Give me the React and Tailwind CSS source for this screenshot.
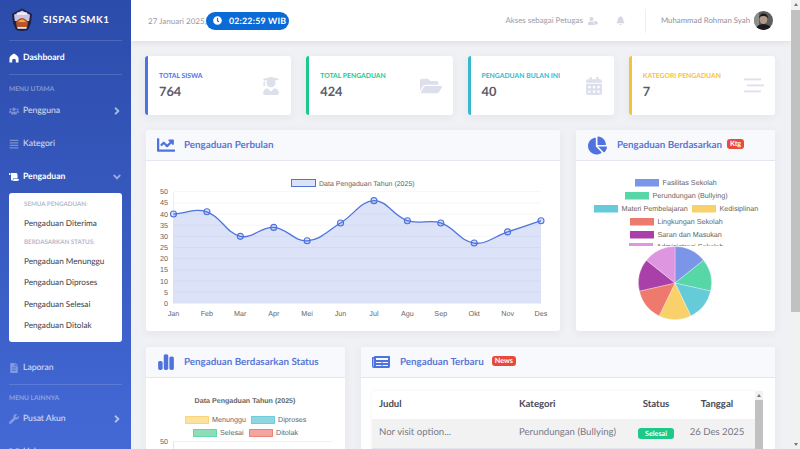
import React from "react";
import {
  FaUsers, FaAlignJustify, FaScroll, FaFileAlt, FaWrench, FaAngleRight, FaAngleDown, FaClock, FaUserTag, FaBell,
  FaUserGraduate, FaFolderOpen, FaCalendarAlt, FaChartLine, FaChartPie, FaNewspaper,
} from "react-icons/fa";
import { FaChartSimple, FaDiagramProject } from "react-icons/fa6";

const months = ["Jan", "Feb", "Mar", "Apr", "Mei", "Jun", "Jul", "Agu", "Sep", "Okt", "Nov", "Des"];
const values = [40, 41, 30, 34, 28, 36, 46, 37, 36, 27, 32, 37];

const plot = { left: 27.5, right: 395, top: 30.7, bottom: 142.3 };
const px = (i) => plot.left + (i * (plot.right - plot.left)) / 11;
const py = (v) => plot.bottom - (v / 50) * (plot.bottom - plot.top);
const points = values.map((v, i) => [px(i), py(v)]);

// same curve as chart.js with tension 0.4
function linePath() {
  const ctrl = points.map((p, i) => {
    const a = points[i - 1] || p;
    const b = points[i + 1] || p;
    const d1 = Math.hypot(p[0] - a[0], p[1] - a[1]);
    const d2 = Math.hypot(b[0] - p[0], b[1] - p[1]);
    const s1 = d1 / (d1 + d2);
    const s2 = d2 / (d1 + d2);
    return {
      prev: [p[0] - 0.4 * s1 * (b[0] - a[0]), p[1] - 0.4 * s1 * (b[1] - a[1])],
      next: [p[0] + 0.4 * s2 * (b[0] - a[0]), p[1] + 0.4 * s2 * (b[1] - a[1])],
    };
  });
  let d = `M${points[0][0]} ${points[0][1]}`;
  for (let i = 1; i < points.length; i++) {
    const c1 = ctrl[i - 1].next;
    const c2 = ctrl[i].prev;
    d += ` C${c1[0]} ${c1[1]} ${c2[0]} ${c2[1]} ${points[i][0]} ${points[i][1]}`;
  }
  return d;
}

function pieSlice(i, n, cx, cy, r) {
  const a1 = (i / n) * 2 * Math.PI - Math.PI / 2;
  const a2 = ((i + 1) / n) * 2 * Math.PI - Math.PI / 2;
  return `M${cx} ${cy} L${cx + r * Math.cos(a1)} ${cy + r * Math.sin(a1)} A${r} ${r} 0 0 1 ${cx + r * Math.cos(a2)} ${cy + r * Math.sin(a2)} Z`;
}

const chartText = { fontFamily: "'Liberation Sans', sans-serif" };

function LineChart() {
  const line = linePath();
  return (
    <svg width="414" height="170" style={chartText} className="block">
      <rect x="145.5" y="18.5" width="24" height="7" fill="#dce3f9" stroke="#4e73df" />
      <text x="173" y="24.5" fontSize="7" fill="#666">Data Pengaduan Tahun (2025)</text>
      {[0, 5, 10, 15, 20, 25, 30, 35, 40, 45, 50].map((t) => (
        <g key={t}>
          <line x1={plot.left} x2={plot.right} y1={py(t)} y2={py(t)} stroke="#f6f6f6" />
          <text x="22" y={py(t) + 2.6} fontSize="7.2" fill="#666" textAnchor="end">{t}</text>
        </g>
      ))}
      <line x1={plot.left} x2={plot.left} y1={plot.top} y2={plot.bottom} stroke="#eee" />
      <path d={`${line} L${plot.right} ${plot.bottom} L${plot.left} ${plot.bottom} Z`} fill="#4e73df" fillOpacity="0.2" />
      <path d={line} fill="none" stroke="#4e73df" strokeWidth="1.3" />
      {points.map((p, i) => (
        <circle key={i} cx={p[0]} cy={p[1]} r="3" fill="#4e73df" fillOpacity="0.2" stroke="#4e73df" strokeWidth="1.1" />
      ))}
      {months.map((m, i) => (
        <text key={m} x={px(i)} y="154.5" fontSize="7.2" fill="#666" textAnchor="middle">{m}</text>
      ))}
    </svg>
  );
}

const pieLegend = [
  { x: 59, y: 18, label: "Fasilitas Sekolah", color: "#7b96e8" },
  { x: 49, y: 31, label: "Perundungan (Bullying)", color: "#57d6a8" },
  { x: 18, y: 44, label: "Materi Pembelajaran", color: "#66cbd9" },
  { x: 116, y: 44, label: "Kedisiplinan", color: "#f8d16b" },
  { x: 54, y: 57, label: "Lingkungan Sekolah", color: "#ed7a6d" },
  { x: 54, y: 70, label: "Saran dan Masukan", color: "#a93fa8" },
  { x: 53, y: 82, label: "Administrasi Sekolah", color: "#df96e0" },
];
const pieColors = ["#7b96e8", "#57d6a8", "#66cbd9", "#f8d16b", "#ed7a6d", "#a93fa8", "#df96e0"];

function PieChart() {
  return (
    <svg width="199" height="170" style={chartText} className="block">
      <defs>
        <clipPath id="legend-clip">
          <rect x="0" y="0" width="199" height="85" />
        </clipPath>
      </defs>
      <g clipPath="url(#legend-clip)">
        {pieLegend.map((l) => (
          <g key={l.label}>
            <rect x={l.x} y={l.y} width="24" height="7.5" fill={l.color} />
            <text x={l.x + 27.5} y={l.y + 6.2} fontSize="7.2" fill="#666">{l.label}</text>
          </g>
        ))}
      </g>
      {pieColors.map((c, i) => (
        <path key={c} d={pieSlice(i, 7, 99, 122, 36.5)} fill={c} stroke="#fff" strokeWidth="0.3" />
      ))}
    </svg>
  );
}

const statusLegend = [
  { x: 39, y: 38, label: "Menunggu", color: "#fbe29f", line: "#f6c23e" },
  { x: 105, y: 38, label: "Diproses", color: "#8fd6e0", line: "#36b9cc" },
  { x: 47, y: 51, label: "Selesai", color: "#8fdcb8", line: "#1cc88a" },
  { x: 103, y: 51, label: "Ditolak", color: "#f3a5a0", line: "#e74a3b" },
];

function StatusChart() {
  return (
    <svg width="199" height="170" style={chartText} className="block">
      <text x="99" y="25" fontSize="7.1" fontWeight="700" fill="#666" textAnchor="middle">Data Pengaduan Tahun (2025)</text>
      {statusLegend.map((l) => (
        <g key={l.label}>
          <rect x={l.x + 0.5} y={l.y + 0.5} width="23" height="7" fill={l.color} stroke={l.line} strokeOpacity="0.6" />
          <text x={l.x + 27} y={l.y + 6.2} fontSize="7.2" fill="#666">{l.label}</text>
        </g>
      ))}
      <text x="22" y="66" fontSize="7.2" fill="#666" textAnchor="end">50</text>
      <line x1="27.5" x2="27.5" y1="63" y2="170" stroke="#e5e5e5" />
      <line x1="27.5" x2="186" y1="63.5" y2="63.5" stroke="#f2f2f2" />
    </svg>
  );
}

function Logo() {
  return (
    <svg width="22" height="24" viewBox="0 0 22 24" className="shrink-0">
      <path d="M11 0.5 L21 6 L20 15 L17 22 Q11 24 5 22 L2 15 L1 6 Z" fill="#22203f" />
      <path d="M11 2.5 L19 6.8 L18.2 13 H3.8 L3 6.8 Z" fill="#c9c4e6" />
      <path d="M5 14 Q11 6 17 14 L16 20 H6 Z" fill="#b8562a" />
      <path d="M7 14 Q11 9 15 14 Z" fill="#f0b040" />
      <rect x="6" y="4.5" width="10" height="2.2" fill="#f4f3fb" />
      <rect x="6.5" y="19" width="9" height="1.8" fill="#e8e6f2" />
    </svg>
  );
}

function Avatar() {
  return (
    <svg width="19" height="19" viewBox="0 0 19 19" className="shrink-0 block">
      <clipPath id="avatar-clip"><circle cx="9.5" cy="9.5" r="9.5" /></clipPath>
      <g clipPath="url(#avatar-clip)">
        <rect width="19" height="19" fill="#5d5f5c" />
        <rect x="0" y="0" width="5" height="19" fill="#8d8f8a" />
        <ellipse cx="9.5" cy="8.5" rx="3.8" ry="4.6" fill="#b39a88" />
        <path d="M5 7 Q6 2 10 2.5 Q14 3 14 7 Q12 4.5 9 5 Q6 5 5 7Z" fill="#1d1c1b" />
        <path d="M1 19 Q3 13 9.5 13 Q16 13 18 19Z" fill="#1c1c1e" />
      </g>
    </svg>
  );
}

function DomeIcon() {
  return (
    <svg width="10" height="10" viewBox="0 0 11 11" className="shrink-0">
      <path d="M0.5 10.5 V6 Q0.5 3 5.5 0.5 Q10.5 3 10.5 6 V10.5 H7.5 V8 Q7.5 6.2 5.5 6.2 Q3.5 6.2 3.5 8 V10.5 Z" fill="#fff" />
    </svg>
  );
}

function LinesIcon() {
  return (
    <svg width="20" height="16" viewBox="0 0 20 16" className="shrink-0">
      <rect x="0" y="0.5" width="17" height="1.8" fill="#dddfeb" />
      <rect x="3" y="6.5" width="17" height="1.8" fill="#dddfeb" />
      <rect x="0" y="12.5" width="17" height="1.8" fill="#dddfeb" />
    </svg>
  );
}

function NavItem({ icon, label, chevron, active, className = "" }) {
  return (
    <div className={`flex items-center h-[33px] shrink-0 pl-[9px] pr-[8px] text-[8.6px] ${active ? "text-white font-bold" : "text-white/80"} ${className}`}>
      <span className="w-[14px] shrink-0 flex items-center">{icon}</span>
      <span className="flex-1">{label}</span>
      {chevron}
    </div>
  );
}

function Sidebar() {
  const dim = "text-white/35 text-[10px]";
  return (
    <aside className="w-[131px] h-full shrink-0 bg-gradient-to-b from-[#2c4cab] to-[#4469d6] flex flex-col overflow-hidden">
      <div className="flex items-center h-[41px] mx-[9px] gap-[10px] pl-[2px] border-b border-white/15 shrink-0">
        <Logo />
        <span className="text-white text-[9.8px] font-bold tracking-[0.5px] whitespace-nowrap">SISPAS SMK1</span>
      </div>
      <NavItem active icon={<DomeIcon />} label="Dashboard" />
      <div className="mx-[9px] border-t border-white/15 shrink-0" />
      <div className="h-[19px] pl-[9px] pt-[8px] text-white/40 text-[6.6px] font-bold leading-[8px] shrink-0 flex items-center">MENU UTAMA</div>
      <NavItem icon={<FaUsers className={dim} />} label="Pengguna" chevron={<FaAngleRight className="text-white/60 text-[12px]" />} />
      <NavItem icon={<FaAlignJustify className={dim} />} label="Kategori" />
      <NavItem active icon={<FaScroll className="text-white text-[10px]" />} label="Pengaduan" chevron={<FaAngleDown className="text-white/50 text-[12px]" />} />
      <div className="mx-[9px] h-[149px] shrink-0 bg-white rounded-[3px] pl-[15px] pt-[6px] flex flex-col text-[#3a3b45] text-[8.2px]">
        <div className="text-[6.2px] font-bold text-[#b7b9cc] h-[11px] leading-[11px] whitespace-nowrap">SEMUA PENGADUAN:</div>
        <div className="h-[27px] leading-[27px]">Pengaduan Diterima</div>
        <div className="text-[6.2px] font-bold text-[#b7b9cc] h-[11px] leading-[11px] whitespace-nowrap">BERDASARKAN STATUS:</div>
        <div className="h-[21.4px] leading-[21.4px] mt-[3px]">Pengaduan Menunggu</div>
        <div className="h-[21.4px] leading-[21.4px]">Pengaduan Diproses</div>
        <div className="h-[21.4px] leading-[21.4px]">Pengaduan Selesai</div>
        <div className="h-[21.4px] leading-[21.4px]">Pengaduan Ditolak</div>
      </div>
      <NavItem icon={<FaFileAlt className={dim} />} label="Laporan" className="mt-[9px]" />
      <div className="mx-[9px] border-t border-white/15 shrink-0" />
      <div className="h-[19px] pl-[9px] pt-[7px] text-white/40 text-[6.6px] font-bold leading-[8px] shrink-0 flex items-center">MENU LAINNYA</div>
      <NavItem icon={<FaWrench className={dim} />} label="Pusat Akun" chevron={<FaAngleRight className="text-white/60 text-[12px]" />} className="-mt-[2px]" />
      <NavItem icon={<FaDiagramProject className={dim} />} label="Halaman" />
    </aside>
  );
}

function Header() {
  return (
    <header className="h-[41px] shrink-0 bg-white shadow-[0_1px_6px_rgba(58,59,69,0.12)] flex items-center pl-[17px] pr-[18px] relative">
      <span className="text-[8px] text-[#9a9ca8] w-[58px] whitespace-nowrap">27 Januari 2025,</span>
      <span className="h-[18px] w-[83px] rounded-full bg-[#0a6ad6] text-white text-[8.8px] font-bold flex items-center pl-[7px] gap-[7px] whitespace-nowrap tracking-[0.2px]">
        <FaClock className="text-[9px]" />
        02:22:59 WIB
      </span>
      <span className="ml-auto text-[7.9px] text-[#9a9ca8] whitespace-nowrap">Akses sebagai Petugas</span>
      <FaUserTag className="ml-[5px] text-[#d5d7e3] text-[10px]" />
      <FaBell className="ml-[18px] text-[#d5d7e3] text-[9px]" />
      <span className="ml-[20px] h-[24px] border-l border-[#eceef3]" />
      <span className="ml-[15px] text-[7.8px] text-[#8d8f9c] whitespace-nowrap">Muhammad Rohman Syah</span>
      <span className="ml-[4px]"><Avatar /></span>
    </header>
  );
}

const stats = [
  { label: "TOTAL SISWA", value: "764", border: "border-[#4e73df]", text: "text-[#4e73df]", icon: <FaUserGraduate className="text-[#dddfeb] text-[18px]" /> },
  { label: "TOTAL PENGADUAN", value: "424", border: "border-[#1cc88a]", text: "text-[#1cc88a]", icon: <FaFolderOpen className="text-[#dddfeb] text-[22px]" /> },
  { label: "PENGADUAN BULAN INI", value: "40", border: "border-[#36b9cc]", text: "text-[#36b9cc]", icon: <FaCalendarAlt className="text-[#dddfeb] text-[18px]" /> },
  { label: "KATEGORI PENGADUAN", value: "7", border: "border-[#f6c23e]", text: "text-[#f6c23e]", icon: <LinesIcon /> },
];

function StatCard({ label, value, border, text, icon }) {
  return (
    <div className={`h-[59px] bg-white rounded-[3px] border-l-[3px] ${border} shadow-[0_2px_10px_rgba(58,59,69,0.06)] flex items-center pl-[11px] pr-[11px]`}>
      <div className="flex-1 min-w-0">
        <div className={`text-[6.8px] font-bold leading-[10px] whitespace-nowrap ${text}`}>{label}</div>
        <div className="text-[12.8px] font-bold leading-[18px] mt-[1px] text-[#5a5c69]">{value}</div>
      </div>
      {icon}
    </div>
  );
}

function Card({ icon, title, badge, children, pad = "pl-[11px]", badgeGap = "ml-[5px]", gap = "gap-[9px]" }) {
  return (
    <section className="bg-white rounded-[3px] shadow-[0_2px_10px_rgba(58,59,69,0.06)] overflow-hidden">
      <div className={`h-[31px] bg-[#f8f9fc] border-b border-[#e3e6f0] flex items-center ${pad} ${gap}`}>
        {icon}
        <h2 className="text-[9.8px] font-bold text-[#5a77d8] whitespace-nowrap">
          {title}
          {badge && <span className={`relative -top-[1.5px] inline-block h-[10px] px-[3px] rounded-[3px] bg-[#e74a3b] text-white text-[7.2px] font-bold leading-[10px] ${badgeGap}`}>{badge}</span>}
        </h2>
      </div>
      {children}
    </section>
  );
}

const rows = [
  ["Nor visit option...", "Perundungan (Bullying)", "Selesai", "26 Des 2025"],
  ["Nor visit option...", "Perundungan (Bullying)", "Selesai", "26 Des 2025"],
];

function RecentTable() {
  return (
    <div className="pl-[11px] pr-[12px] pt-[13px] flex">
      <div className="flex-1 min-w-0 text-[9.6px] shadow-[0_0_3px_rgba(58,59,69,0.08)]">
        <div className="grid grid-cols-[140px_114px_60px_1fr] h-[28px] items-center font-bold text-[#4a4b57] text-[9.6px]">
          <div className="pl-[7px]">Judul</div>
          <div className="pl-[7px]">Kategori</div>
          <div className="text-center">Status</div>
          <div className="text-center pr-[7px]">Tanggal</div>
        </div>
        {rows.map((r, i) => (
          <div key={i} className={`grid grid-cols-[140px_114px_60px_1fr] h-[30px] items-center text-[#767886] border-b border-[#e3e6f0] ${i % 2 === 0 ? "bg-[#f2f2f2]" : "bg-white"}`}>
            <div className="pl-[7px] whitespace-nowrap">{r[0]}</div>
            <div className="pl-[7px] whitespace-nowrap">{r[1]}</div>
            <div className="flex justify-center">
              <span className="-mt-[1px] w-[36px] h-[11px] rounded-[3px] bg-[#1cc88a] text-white text-[7.2px] font-bold leading-[11px] text-center">{r[2]}</span>
            </div>
            <div className="text-center pr-[7px] whitespace-nowrap">{r[3]}</div>
          </div>
        ))}
      </div>
      <div className="w-[8px] shrink-0 bg-[#f1f1f1] flex flex-col items-center h-[60px]">
        <span className="mt-[3px] mb-[3px] border-x-[2px] border-x-transparent border-b-[3px] border-b-[#777]" />
        <span className="w-full flex-1 bg-[#c1c1c1]" />
      </div>
    </div>
  );
}

export default function App() {
  return (
    <div className="w-[800px] h-[449px] overflow-hidden flex font-['Lato',sans-serif] [text-rendering:geometricPrecision] bg-[#f0f1f5]">
      <Sidebar />
      <div className="flex-1 min-w-0 h-full flex flex-col overflow-hidden">
        <Header />
        <main className="pl-[14px] pr-[16px] pt-[15px]">
          <div className="grid grid-cols-4 gap-[15px]">
            {stats.map((s) => <StatCard key={s.label} {...s} />)}
          </div>
          <div className="grid grid-cols-[414px_199px] gap-[16px] mt-[15px] pl-px">
            <Card icon={<FaChartLine className="text-[#4e73df] text-[18px]" />} title="Pengaduan Perbulan">
              <LineChart />
            </Card>
            <Card icon={<FaChartPie className="text-[#4e73df] text-[19px]" />} title="Pengaduan Berdasarkan" badge="Ktg" pad="pl-[12px]" gap="gap-[10px]">
              <PieChart />
            </Card>
          </div>
          <div className="grid grid-cols-[199px_414px] gap-[16px] mt-[16px] pl-px">
            <Card icon={<FaChartSimple className="text-[#4e73df] text-[18px]" />} title="Pengaduan Berdasarkan Status">
              <StatusChart />
            </Card>
            <Card icon={<FaNewspaper className="text-[#4e73df] text-[18px]" />} title="Pengaduan Terbaru" badge="News" badgeGap="ml-[8px]" gap="gap-[10px]">
              <RecentTable />
            </Card>
          </div>
        </main>
      </div>
      <div className="w-[9px] h-full shrink-0 bg-[#f1f1f1] flex flex-col items-center">
        <span className="mt-[3px] mb-[4px] border-x-[2px] border-x-transparent border-b-[3px] border-b-[#777]" />
        <span className="w-full h-[302px] bg-[#c1c1c1]" />
        <span className="mt-auto mb-[3px] border-x-[2px] border-x-transparent border-t-[3px] border-t-[#777]" />
      </div>
    </div>
  );
}
